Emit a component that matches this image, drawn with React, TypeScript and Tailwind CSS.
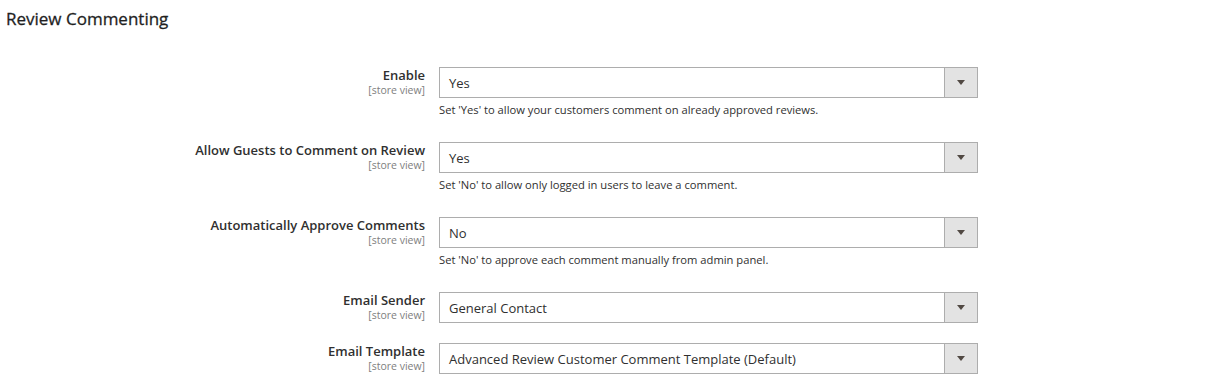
const rows = [
  { label: "Enable", value: "Yes", note: "Set 'Yes' to allow your customers comment on already approved reviews." },
  { label: "Allow Guests to Comment on Review", value: "Yes", note: "Set 'No' to allow only logged in users to leave a comment." },
  { label: "Automatically Approve Comments", value: "No", note: "Set 'No' to approve each comment manually from admin panel." },
  { label: "Email Sender", value: "General Contact" },
  { label: "Email Template", value: "Advanced Review Customer Comment Template (Default)" },
];

function SelectBox({ value }: { value: string }) {
  return (
    <div className="flex h-[31px] w-[539px] border border-[#adadad] bg-white">
      <div className="flex-1 pl-[9px] pt-px text-[13px] leading-[29px] text-[#303030]">{value}</div>
      <div className="flex w-[33px] items-center justify-center border-l border-[#adadad] bg-[#e3e3e3]">
        <svg width="8" height="5" viewBox="0 0 8 5">
          <path d="M0 0 H8 L4 5 Z" fill="#514943" />
        </svg>
      </div>
    </div>
  );
}

export default function App() {
  return (
    <div className="h-[383px] w-[1215px] overflow-hidden bg-white font-['Open_Sans',sans-serif] text-[#303030]">
      <h2
        className="pl-[6px] pt-[8px] text-[17px] font-normal leading-[22px] text-[#1f1f1f] [-webkit-text-stroke:0.3px_#1f1f1f]"
      >
        Review Commenting
      </h2>
      <div className="mt-[37px] flex flex-col">
        {rows.map((row) => (
          <div key={row.label} className="mb-[20px] flex">
            <div className="w-[425px] text-right">
              <div className="text-[13px] font-semibold leading-[16px] text-[#303030]">{row.label}</div>
              <div className="mt-px text-[10.5px] leading-[12px] text-[#808080]">[store view]</div>
            </div>
            <div className="ml-[14px]">
              <SelectBox value={row.value} />
              {row.note && (
                <div className="pb-[4px] pt-[4px] text-[11.2px] leading-[16px] text-[#303030]">{row.note}</div>
              )}
            </div>
          </div>
        ))}
      </div>
    </div>
  );
}
